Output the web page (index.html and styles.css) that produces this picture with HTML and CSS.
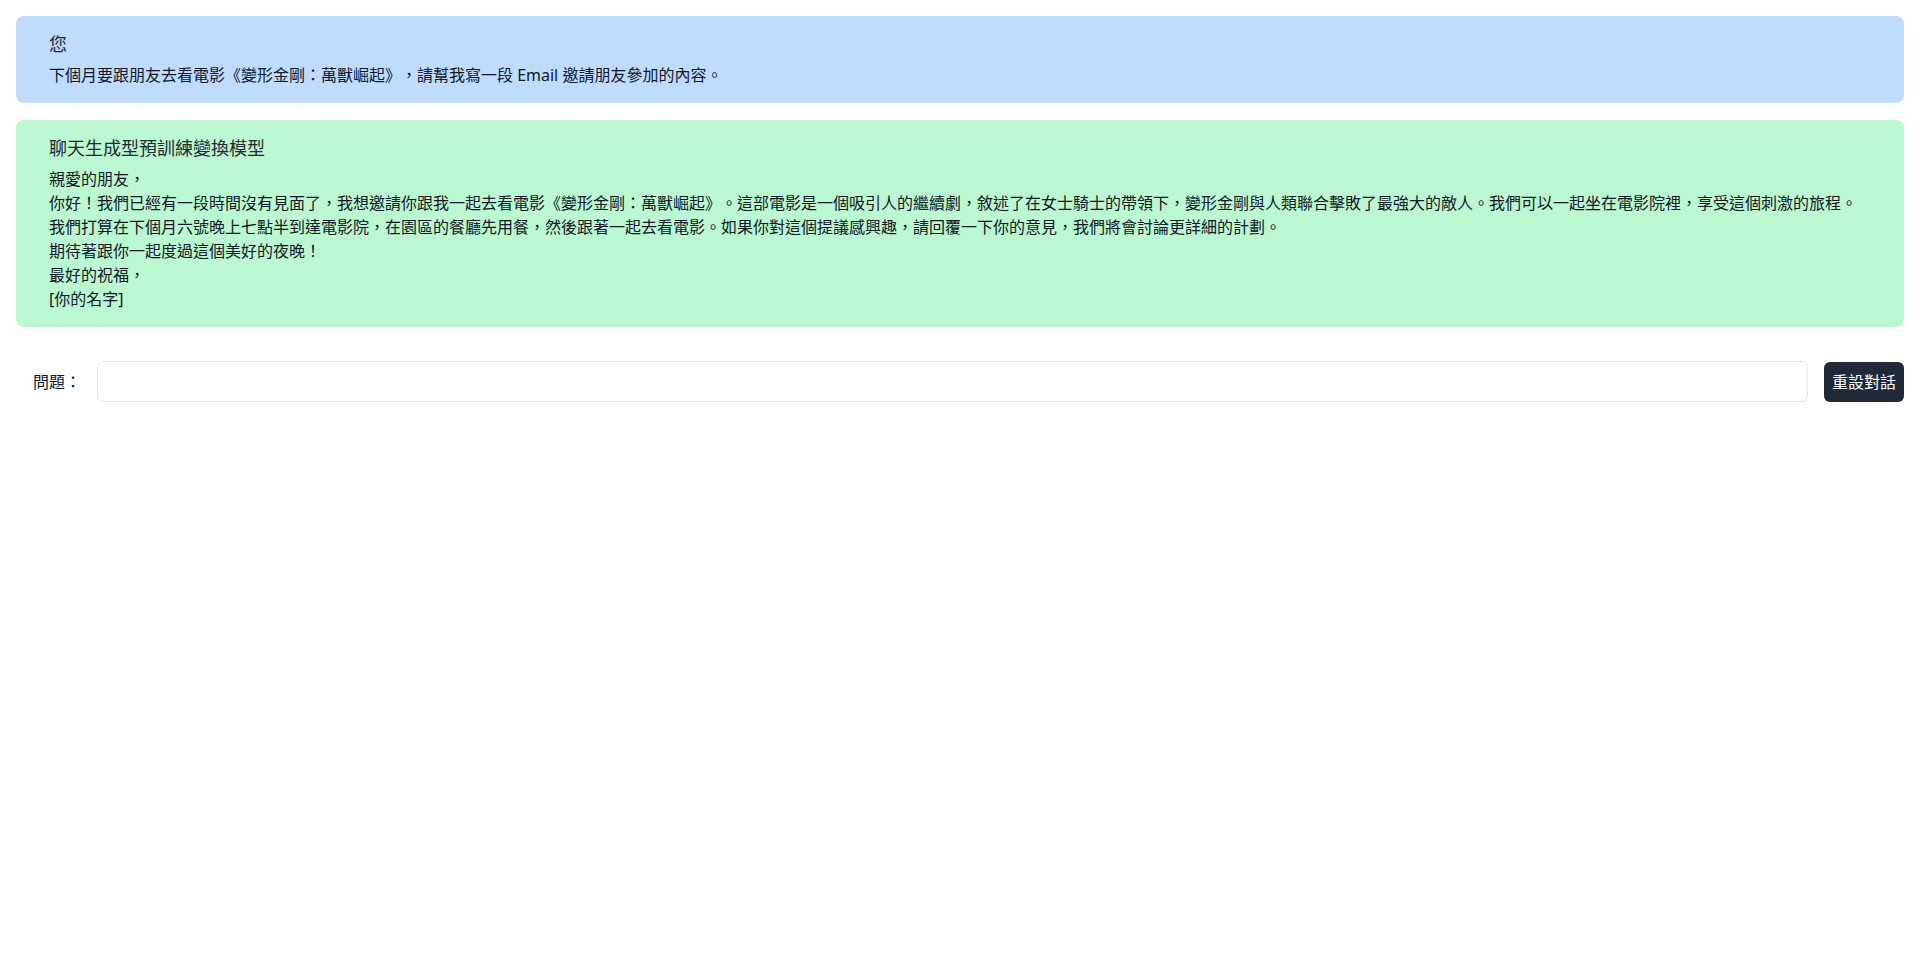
FILE: index.html
```html
<!DOCTYPE html>
<html lang="zh-Hant">
<head>
<meta charset="utf-8">
<title>聊天</title>
<link rel="stylesheet" href="styles.css">
</head>
<body>
<main class="page">
  <section class="msg msg-user">
    <div class="msg-title">您</div>
    <div class="msg-body">
      <p>下個月要跟朋友去看電影《變形金剛：萬獸崛起》，請幫我寫一段 Email 邀請朋友參加的內容。</p>
    </div>
  </section>
  <section class="msg msg-bot">
    <div class="msg-title">聊天生成型預訓練變換模型</div>
    <div class="msg-body">
      <p>親愛的朋友，</p>
      <p>你好！我們已經有一段時間沒有見面了，我想邀請你跟我一起去看電影《變形金剛：萬獸崛起》。這部電影是一個吸引人的繼續劇，敘述了在女士騎士的帶領下，變形金剛與人類聯合擊敗了最強大的敵人。我們可以一起坐在電影院裡，享受這個刺激的旅程。</p>
      <p>我們打算在下個月六號晚上七點半到達電影院，在園區的餐廳先用餐，然後跟著一起去看電影。如果你對這個提議感興趣，請回覆一下你的意見，我們將會討論更詳細的計劃。</p>
      <p>期待著跟你一起度過這個美好的夜晚！</p>
      <p>最好的祝福，</p>
      <p>[你的名字]</p>
    </div>
  </section>
  <form class="ask" onsubmit="return false">
    <label class="ask-label" for="q">問題：</label>
    <input class="ask-input" id="q" type="text">
    <button class="ask-btn" type="button">重設對話</button>
  </form>
</main>
</body>
</html>
```
FILE: styles.css
```css
* { box-sizing: border-box; }
html, body { margin: 0; padding: 0; background: #ffffff; }
body {
  font-family: "Noto Sans", "Noto Sans CJK TC", sans-serif;
  font-size: 16px;
  line-height: 24px;
  color: #1f2937;
  text-spacing-trim: space-all;
}
.page {
  padding: 16px;
  display: flex;
  flex-direction: column;
}
.msg {
  border-radius: 8px;
  padding: 16px 32px 16px 33px;
}
.msg + .msg { margin-top: 17px; }
.msg-user { background: #bfdbfe; }
.msg-bot { background: #bbf7d0; }
.msg-title {
  font-size: 18px;
  line-height: 24px;
  color: #1f2937;
  margin-bottom: 7px;
}
.msg-body p {
  margin: 0;
  font-size: 16px;
  line-height: 24px;
  color: #111827;
}
.ask {
  margin-top: 34px;
  display: flex;
  align-items: center;
  gap: 16px;
}
.ask-label {
  margin-left: 17px;
  width: 48px;
  flex: none;
  font-size: 16px;
  color: #111827;
  white-space: nowrap;
}
.ask-input {
  flex: 1;
  height: 41px;
  border: 1px solid #e5e7eb;
  border-radius: 6px;
  padding: 8px 12px;
  font: inherit;
  background: #fff;
  outline: none;
}
.ask-btn {
  flex: none;
  width: 80px;
  height: 40px;
  border: none;
  border-radius: 6px;
  background: #1f2937;
  color: #ffffff;
  font-family: "Noto Sans", "Noto Sans CJK TC", sans-serif;
  font-size: 16px;
  line-height: 24px;
  padding: 8px;
}
```
